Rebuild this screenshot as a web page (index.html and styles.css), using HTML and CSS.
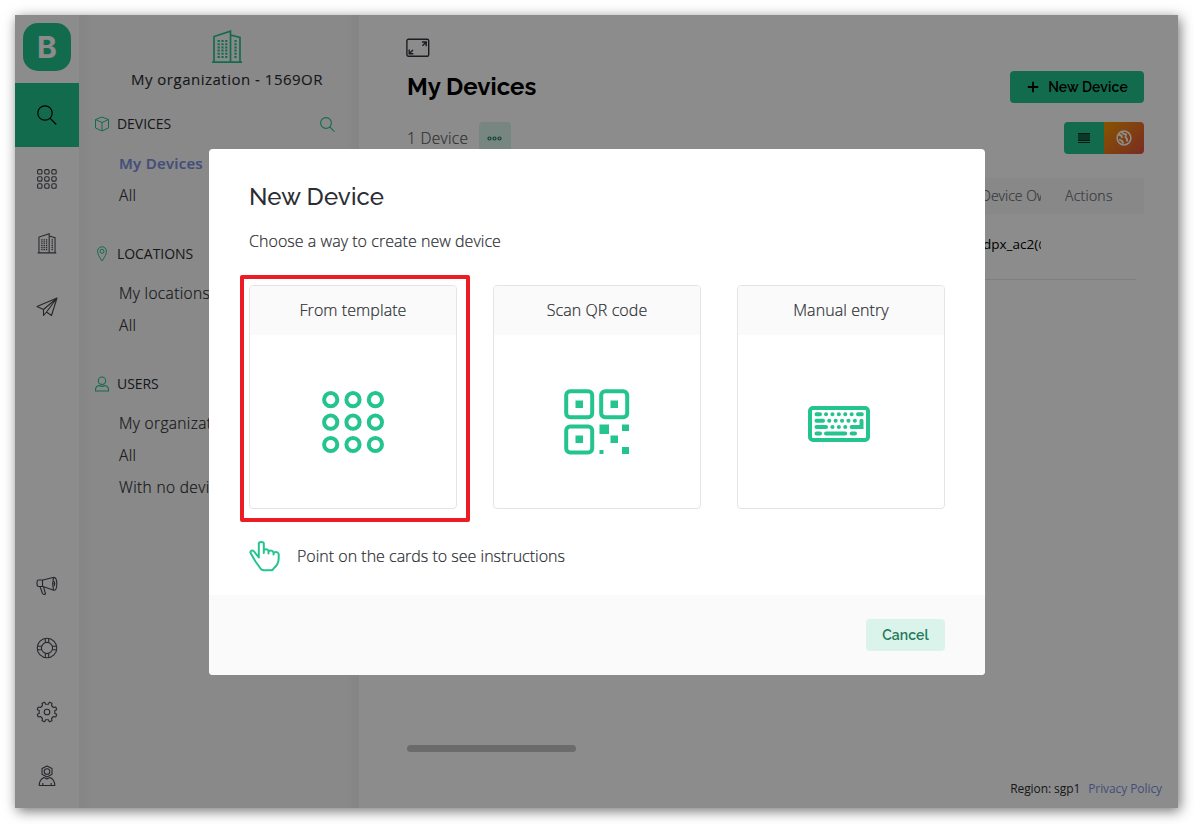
FILE: index.html
```html
<!DOCTYPE html>
<html lang="en">
<head>
<meta charset="utf-8">
<title>My Devices</title>
<link rel="stylesheet" href="styles.css">
</head>
<body>
<svg class="defs" width="0" height="0">
  <symbol id="building" viewBox="0 0 32 34">
    <g fill="none" stroke="currentColor" stroke-width="1.700"><path d="M1 32.200H31M3 32V6.500L19.500 1.200V32M19.500 5L29 7.500V32"/><path d="M7.700 10V28M11.500 10V28M15.300 10V28M24.500 10V28" stroke-width="2.200" stroke-dasharray="2 1.200"/></g>
  </symbol>
  <symbol id="search" viewBox="0 0 20 20">
    <g fill="none" stroke="currentColor"><circle cx="8" cy="8" r="7.200"/><path d="M13 13.200L19.300 19.500"/></g>
  </symbol>
</svg>
<div class="window">
  <nav class="rail">
    <div class="brand"><span class="brand-mark">B</span></div>
    <a class="rail-item active"><svg width="20" height="20" stroke-width="1.200"><use href="#search"/></svg></a>
    <a class="rail-item"><svg width="20" height="20" viewBox="0 0 20 20" fill="none" stroke="currentColor" stroke-width="1.100"><rect x=".6" y=".6" width="4.400" height="4.400" rx="1.300"/><rect x="7.700" y=".6" width="4.400" height="4.400" rx="1.300"/><rect x="14.800" y=".6" width="4.400" height="4.400" rx="1.300"/><rect x=".6" y="7.700" width="4.400" height="4.400" rx="1.300"/><rect x="7.700" y="7.700" width="4.400" height="4.400" rx="1.300"/><rect x="14.800" y="7.700" width="4.400" height="4.400" rx="1.300"/><rect x=".6" y="14.800" width="4.400" height="4.400" rx="1.300"/><rect x="7.700" y="14.800" width="4.400" height="4.400" rx="1.300"/><rect x="14.800" y="14.800" width="4.400" height="4.400" rx="1.300"/></svg></a>
    <a class="rail-item"><svg width="20" height="21"><use href="#building"/></svg></a>
    <a class="rail-item"><svg width="22" height="20" viewBox="0 0 22 20" fill="none" stroke="currentColor" stroke-width="1.100" stroke-linejoin="round"><path d="M1 9.500L21 1L15.500 18.500L10.500 15L7.500 18.500V12.500ZM1 9.500L7.500 12.500M21 1L7.500 12.500M21 1L10.500 15"/></svg></a>
    <div class="rail-space"></div>
    <a class="rail-item low"><svg width="22" height="20" viewBox="0 0 22 20" fill="none" stroke="currentColor" stroke-width="1.100" stroke-linejoin="round"><path d="M7 4L17 1.500Q20.800 .5 20.800 8T17 14L7 10.500H2.500Q1 10.500 1 7.200T2.500 4ZM6.500 4V10.500M17.500 1.700Q15.800 8 17.500 14M4 10.500L6.500 17.500Q8 19.200 9.500 18L7.500 10.800"/><path d="M17.500 4.800Q20 7.500 17.500 10.500M17.200 7.700H19"/></svg></a>
    <a class="rail-item"><svg width="22" height="22" viewBox="0 0 22 22" fill="none" stroke="currentColor" stroke-width="1.100"><circle cx="11" cy="11" r="9.800"/><circle cx="11" cy="11" r="5.600"/><path d="M9.300 1.300V5.600M12.700 1.300V5.600M9.300 16.400V20.700M12.700 16.400V20.700M1.300 9.300H5.600M1.300 12.700H5.600M16.400 9.300H20.700M16.400 12.700H20.700"/></svg></a>
    <a class="rail-item"><svg width="22" height="22" viewBox="0 0 22 22" fill="none" stroke="currentColor" stroke-width="1.100" stroke-linejoin="round"><circle cx="11" cy="11" r="2.800"/><path d="M8 1.400H8.800L9.600 3.200H12.400L13.200 1.400H14L16 2.300L15.500 4.500L17.500 6.500L19.700 6L20.600 8V8.800L18.800 9.600V12.400L20.600 13.200V14L19.700 16L17.500 15.500L15.500 17.500L16 19.700L14 20.600H13.200L12.400 18.800H9.600L8.800 20.600H8L6 19.700L6.500 17.500L4.500 15.500L2.300 16L1.400 14V13.200L3.200 12.400V9.600L1.400 8.800V8L2.300 6L4.500 6.500L6.500 4.500L6 2.300Z"/></svg></a>
    <a class="rail-item"><svg width="18" height="22" viewBox="0 0 18 22" fill="none" stroke="currentColor" stroke-width="1.100" stroke-linejoin="round"><path d="M9 1L14 3.600V9.300L9 12L4 9.300V3.600ZM6 12.500Q1.300 14.500 1.200 20.500H16.800Q16.700 14.500 12 12.500L9 14ZM4.800 20.500V18M13.200 20.500V18"/><circle cx="9" cy="6.500" r="2.800"/></svg></a>
  </nav>

  <aside class="sidebar">
    <header class="org">
      <svg class="green" width="32" height="34"><use href="#building"/></svg>
      <span class="org-name">My organization - 1569OR</span>
    </header>
    <section class="group">
      <h2 class="group-title"><svg class="green" width="16" height="16" viewBox="0 0 16 16" fill="none" stroke="currentColor"><path d="M8 1L14.500 3.500V12L8 15L1.500 12V3.500ZM1.500 3.500L8 6.500L14.500 3.500M8 6.500V15"/></svg><span>DEVICES</span><svg class="green find" width="15" height="15" stroke-width="1.500"><use href="#search"/></svg></h2>
      <a class="item current">My Devices</a>
      <a class="item">All</a>
    </section>
    <section class="group">
      <h2 class="group-title"><svg class="green" width="16" height="16" viewBox="0 0 16 16" fill="none" stroke="currentColor"><path d="M8 15Q3.500 8.500 3.500 5.300A4.500 4.500 0 0 1 12.500 5.300Q12.500 8.500 8 15Z"/><circle cx="8" cy="5.300" r="2"/></svg><span>LOCATIONS</span></h2>
      <a class="item">My locations</a>
      <a class="item">All</a>
    </section>
    <section class="group">
      <h2 class="group-title"><svg class="green" width="16" height="16" viewBox="0 0 16 16" fill="none" stroke="currentColor" stroke-width="1.100"><circle cx="8" cy="4.700" r="3.700"/><path d="M1.500 15Q1 10 5.500 9.500Q8 11.300 10.500 9.500Q15 10 14.500 15Z"/></svg><span>USERS</span></h2>
      <a class="item">My organization members</a>
      <a class="item">All</a>
      <a class="item">With no devices</a>
    </section>
  </aside>

  <main class="main">
    <svg class="expand" width="24" height="20" viewBox="0 0 24 20" fill="none" stroke="currentColor" stroke-width="1.400"><rect x=".9" y="1.200" width="21.800" height="17" rx="1.500"/><path d="M16 4H20.200V8.200M20 4.200L16.500 7.700M3.200 11.500V15.700H7.400M3.400 15.500L7 12"/></svg>
    <div class="title-row"><h1 class="title">My Devices</h1><button class="create"><svg width="12" height="12" viewBox="0 0 12 12" stroke="currentColor" stroke-width="1.800"><path d="M6 .8V11.200M.8 6H11.200"/></svg>New Device</button></div>
    <div class="count-row"><span class="count">1 Device</span><button class="more"><svg width="16" height="6" viewBox="0 0 16 6" fill="none" stroke="currentColor" stroke-width="1.200"><circle cx="2.500" cy="3.500" r="1.500"/><circle cx="7.500" cy="3.500" r="1.500"/><circle cx="12.500" cy="3.500" r="1.500"/></svg></button>
      <div class="switch"><span class="view list"><svg width="12" height="12" viewBox="0 0 12 12"><path d="M0 1H12V8H0Z" fill="#1a634a"/><path d="M0 1.500H12M0 8.500H12M0 10.500H12" stroke="#0c3024"/></svg></span><span class="view map"><svg width="16" height="16" viewBox="0 0 16 16" fill="none" stroke="currentColor"><circle cx="8" cy="8" r="6.900" stroke-width="1.500"/><path d="M2.500 4.500L5.500 5.500L6 8M5.500 2L8 4L10 4.500L9.500 7L11 9V11.500M3 9.500L6 11L7.500 13.500" stroke-width="1.900"/></svg></span></div>
    </div>
    <div class="table">
      <div class="row head"><span class="cell owner">Device Owner</span><span class="cell actions">Actions</span></div>
      <div class="row data"><span class="cell owner">dpx_ac2(@</span></div>
    </div>
    <div class="scrollbar"></div>
    <footer class="foot"><span class="region">Region: sgp1</span><a class="privacy">Privacy Policy</a></footer>
  </main>

  <div class="backdrop">
    <div class="dialog" role="dialog">
      <div class="dialog-body">
        <h2 class="dialog-title">New Device</h2>
        <p class="lead">Choose a way to create new device</p>
        <div class="cards">
          <div class="card selected"><h3 class="card-title">From template</h3><div class="card-art dots"><svg width="64" height="64" viewBox="0 0 64 64" fill="none" stroke="currentColor" stroke-width="4"><circle cx="9.700" cy="9.700" r="6.600"/><circle cx="32" cy="9.700" r="6.600"/><circle cx="54.400" cy="9.700" r="6.600"/><circle cx="9.700" cy="32.200" r="6.600"/><circle cx="32" cy="32.200" r="6.600"/><circle cx="54.400" cy="32.200" r="6.600"/><circle cx="9.700" cy="54.500" r="6.600"/><circle cx="32" cy="54.500" r="6.600"/><circle cx="54.400" cy="54.500" r="6.600"/></svg></div></div>
          <div class="card"><h3 class="card-title">Scan QR code</h3><div class="card-art qr"><svg width="66" height="66" viewBox="0 0 66 66" fill="none" stroke="currentColor" stroke-width="4"><rect x="2.200" y="2.200" width="26" height="26" rx="4"/><rect x="37.200" y="2.200" width="26" height="26" rx="4"/><rect x="2.200" y="37.400" width="26" height="26" rx="4"/><path d="M11.500 11.500H19V19H11.500ZM46.500 11.500H54V19H46.500ZM11.500 46.500H19V54H11.500ZM35.500 35.500H45V45H35.500ZM58 35.500H65V42H58ZM46.500 46.500H54V54H46.500ZM58 58H65V65H58ZM35.500 61H39.500V65H35.500Z" fill="currentColor" stroke="none"/></svg></div></div>
          <div class="card"><h3 class="card-title">Manual entry</h3><div class="card-art keyboard"><svg width="62" height="36" viewBox="0 0 62 36" fill="none" stroke="currentColor" stroke-width="4" stroke-linecap="round"><rect x="2" y="2" width="58" height="32" rx="3"/><path d="M8.500 8.300H12M18 8.300H18.100M24.400 8.300H24.500M30.800 8.300H30.900M37.200 8.300H37.300M43.600 8.300H43.700M50 8.300H53.800M8.500 14.700H15M21.200 14.700H21.300M27.600 14.700H27.700M34 14.700H34.100M40.400 14.700H40.500M46.800 14.700H46.900M8.500 21.100H18M24.400 21.100H24.500M30.800 21.100H30.900M37.200 21.100H37.300M43.600 21.100H53.500V14.700M8.500 27.500H12M18 27.500H37.200M43.600 27.500H47"/></svg></div></div>
        </div>
        <div class="hint"><svg width="32" height="32" viewBox="0 0 32 32" fill="none" stroke="currentColor" stroke-width="2" stroke-linejoin="round" stroke-linecap="round"><path d="M9.800 17.500V3.500Q9.800 2 12.300 2T14.800 3.500V13V11Q14.800 9.300 16.800 9.300T19.500 11V13.500V12Q19.800 10.500 21.800 10.500T24.500 12.500V14.500V13.500Q25 12 27 12T29.700 14V18Q29.700 24.500 25 28Q24 30.200 22 30.200H15Q12.500 30.200 11.500 28.500L6.500 21.500L1.700 13.300Q.9 11.300 2.500 10.600Q4 10 5.500 12L9.800 17.500"/></svg><span class="hint-text">Point on the cards to see instructions</span></div>
      </div>
      <div class="dialog-foot"><button class="cancel">Cancel</button></div>
    </div>
  </div>
</div>
</body>
</html>
```
FILE: styles.css
```css
*, *::after { box-sizing: border-box; }
body { margin: 0; width: 1194px; height: 824px; overflow: hidden; background: #fff; padding: 15px 16px 16px 15px; font: 300 16px/32px "Open Sans", "Noto Sans", sans-serif; color: #2b2d33; }
h1, h2, h3, p { margin: 0; }
button { border: 0; padding: 0; font: inherit; }
svg { display: block; flex: none; }
.defs { position: absolute; }
.window { position: relative; display: flex; width: 1163px; height: 793px; background: #fff; box-shadow: 2px 3px 12px rgba(0,0,0,.55); }

.rail { display: flex; flex-direction: column; width: 64px; color: #454850; }
.brand { height: 68px; padding: 8px; }
.brand-mark { display: flex; align-items: center; justify-content: center; width: 48px; height: 48px; border-radius: 15px; background: #24c48e; color: #fff; font: 700 30px/48px Inter, sans-serif; }
.rail-item { display: flex; align-items: center; justify-content: center; height: 64px; padding-right: 1px; }
.low { padding-top: 4px; }
.active { background: #24c48e; color: #000; }
.rail-space { flex: 1; }

.sidebar { width: 280px; padding: 15px 16px 0 14px; background: linear-gradient(90deg, #f2f2f2, #fafafa 16px, #fafafa 264px, #f2f2f2); overflow: hidden; }
.green { color: #24c48e; }
.org { display: flex; flex-direction: column; align-items: center; height: 78px; padding-left: 18px; }
.org .green { margin-left: -1px; }
.org-name { line-height: 31px; font-weight: 400; font-size: 15px; white-space: nowrap; letter-spacing: .5px; -webkit-text-stroke: .12px; }
.group { margin-bottom: 26px; display: flex; flex-direction: column; }
.group-title { display: flex; align-items: center; gap: 7px; height: 32px; margin-bottom: 8px; padding-left: 1px; font-size: 14px; font-weight: 400; letter-spacing: -.05px; }
.find { margin-left: auto; margin-right: 8px; }
.item { padding-left: 26px; height: 32px; white-space: nowrap; line-height: 30px; font-size: 15.500px; letter-spacing: .35px; }
.item, .lead, .card-title, .hint-text, .count, .head { -webkit-text-stroke: .2px; }
.current { color: #7b8fe0; font-weight: 600; font-size: 15px; letter-spacing: .3px; }

.main { display: flex; flex-direction: column; width: 819px; padding: 23px 34px 0 48px; }
.expand { margin-left: -1px; color: #30343c; }
.title-row { display: flex; justify-content: space-between; margin-top: 13px; height: 32px; }
.title { font: 700 24px/32px Raleway, Lato, sans-serif; color: #000; }
.create { display: flex; align-items: center; justify-content: center; gap: 9px; width: 134px; height: 32px; border-radius: 4px; background: #24c48e; color: #000; font: 650 14px/32px Raleway, Lato, sans-serif; letter-spacing: .1px; padding-left: 1px; }
.count-row { display: flex; margin-top: 19px; height: 32px; }
.count { width: 72px; font-size: 15.500px; color: #555960; letter-spacing: .3px; white-space: nowrap; }
.more { display: flex; align-items: center; justify-content: center; width: 32px; border-radius: 4px; background: #dbf4eb; color: #24785b; }
.switch { display: flex; margin-left: auto; border-radius: 4px; overflow: hidden; }
.view { display: flex; width: 40px; align-items: center; justify-content: center; }
.list { background: #24c48e; }
.map { background: linear-gradient(135deg, #f79a00, #de5040); color: #fff; }
.table { margin-top: 24px; }
.row { display: flex; padding-left: 574px; height: 36px; }
.head { background: #f7f7f7; color: #666a70; font-size: 14px; line-height: 36px; }
.cell { white-space: nowrap; overflow: hidden; }
.owner { width: 60px; }
.actions { margin-left: 24px; letter-spacing: .25px; }
.data { height: 66px; margin-right: 8px; line-height: 60px; font-size: 13.500px; border-bottom: 1px solid #e8e8e8; color: #000; font-weight: 400; }
.data .owner { padding-left: 2px; }
.scrollbar { width: 169px; height: 7px; border-radius: 4px; margin-top: 465px; background: #c3c3c3; }
.foot { display: flex; justify-content: flex-end; gap: 8px; margin: 25px -18px 0 0; font-size: 12px; line-height: 24px; font-weight: 400; letter-spacing: -.08px; }
.privacy { color: #7b8fe0; }

.backdrop { position: absolute; inset: 0; display: flex; align-items: center; justify-content: center; background: rgba(0,0,0,.45); }
.dialog { width: 776px; height: 526px; margin: 1px 0 0 1px; border-radius: 4px; overflow: hidden; background: #fff; }
.dialog-body { height: 446px; padding: 32px 40px 0; }
.dialog-title { font: 500 24px/32px Raleway, Lato, sans-serif; letter-spacing: .1px; color: #2b2d33; }
.lead { margin-top: 12px; letter-spacing: .04px; }
.cards { display: flex; gap: 36px; margin-top: 28px; }
.card { width: 208px; height: 224px; border: 1px solid #e4e4e6; border-radius: 4px; }
.selected { position: relative; }
.selected::after { content: ""; position: absolute; left: -10px; top: -11px; width: 230px; height: 247px; border: 4px solid #ed1c24; border-radius: 2px; }
.card-title { height: 49px; line-height: 49px; background: #fafafa; border-radius: 3px 3px 0 0; text-align: center; font-size: 16px; font-weight: 300; letter-spacing: .08px; }
.card-art { height: 175px; display: flex; align-items: center; justify-content: center; color: #24c48e; }
.dots { padding: 0 1px 2px 0; }
.qr { padding-bottom: 1px; }
.keyboard { padding: 2px 4px 0 0; }
.hint { display: flex; align-items: center; gap: 16px; height: 32px; margin-top: 31px; color: #24c48e; }
.hint-text { color: #2b2d33; }
.dialog-foot { display: flex; justify-content: flex-end; height: 80px; padding: 24px 40px; background: #fafafa; }
.cancel { width: 79px; height: 32px; border-radius: 4px; background: #dbf4eb; color: #24785b; font: 650 14px/32px Raleway, Lato, sans-serif; letter-spacing: .1px; }
```
